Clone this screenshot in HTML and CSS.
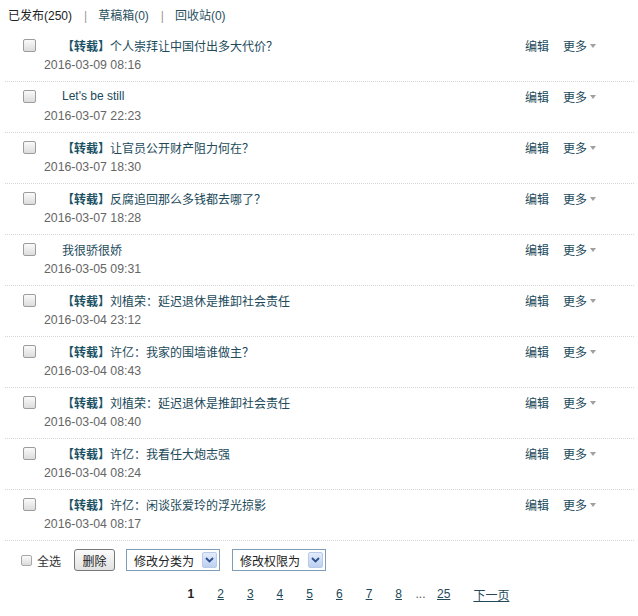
FILE: index.html
```html
<!DOCTYPE html>
<html lang="zh">
<head>
<meta charset="utf-8">
<title>博文管理</title>
<link rel="stylesheet" href="styles.css">
</head>
<body>
<div class="page">
  <div class="tabs">
    <span class="tab-cur">已发布(250)</span>
    <span class="sep">|</span>
    <a class="tab">草稿箱(0)</a>
    <span class="sep">|</span>
    <a class="tab">回收站(0)</a>
  </div>

  <ul class="list">
    <li class="row">
      <div class="main">
        <div class="line1"><input type="checkbox" class="cb"><a class="title"><b>【转载】</b>个人崇拜让中国付出多大代价？</a></div>
        <div class="date">2016-03-09 08:16</div>
      </div>
      <div class="ops"><a class="op">编辑</a><a class="op more">更多<i class="caret"></i></a></div>
    </li>
    <li class="row">
      <div class="main">
        <div class="line1"><input type="checkbox" class="cb"><a class="title">Let's be still</a></div>
        <div class="date">2016-03-07 22:23</div>
      </div>
      <div class="ops"><a class="op">编辑</a><a class="op more">更多<i class="caret"></i></a></div>
    </li>
    <li class="row">
      <div class="main">
        <div class="line1"><input type="checkbox" class="cb"><a class="title"><b>【转载】</b>让官员公开财产阻力何在？</a></div>
        <div class="date">2016-03-07 18:30</div>
      </div>
      <div class="ops"><a class="op">编辑</a><a class="op more">更多<i class="caret"></i></a></div>
    </li>
    <li class="row">
      <div class="main">
        <div class="line1"><input type="checkbox" class="cb"><a class="title"><b>【转载】</b>反腐追回那么多钱都去哪了？</a></div>
        <div class="date">2016-03-07 18:28</div>
      </div>
      <div class="ops"><a class="op">编辑</a><a class="op more">更多<i class="caret"></i></a></div>
    </li>
    <li class="row">
      <div class="main">
        <div class="line1"><input type="checkbox" class="cb"><a class="title">我很骄很娇</a></div>
        <div class="date">2016-03-05 09:31</div>
      </div>
      <div class="ops"><a class="op">编辑</a><a class="op more">更多<i class="caret"></i></a></div>
    </li>
    <li class="row">
      <div class="main">
        <div class="line1"><input type="checkbox" class="cb"><a class="title"><b>【转载】</b>刘植荣：延迟退休是推卸社会责任</a></div>
        <div class="date">2016-03-04 23:12</div>
      </div>
      <div class="ops"><a class="op">编辑</a><a class="op more">更多<i class="caret"></i></a></div>
    </li>
    <li class="row">
      <div class="main">
        <div class="line1"><input type="checkbox" class="cb"><a class="title"><b>【转载】</b>许亿：我家的围墙谁做主？</a></div>
        <div class="date">2016-03-04 08:43</div>
      </div>
      <div class="ops"><a class="op">编辑</a><a class="op more">更多<i class="caret"></i></a></div>
    </li>
    <li class="row">
      <div class="main">
        <div class="line1"><input type="checkbox" class="cb"><a class="title"><b>【转载】</b>刘植荣：延迟退休是推卸社会责任</a></div>
        <div class="date">2016-03-04 08:40</div>
      </div>
      <div class="ops"><a class="op">编辑</a><a class="op more">更多<i class="caret"></i></a></div>
    </li>
    <li class="row">
      <div class="main">
        <div class="line1"><input type="checkbox" class="cb"><a class="title"><b>【转载】</b>许亿：我看任大炮志强</a></div>
        <div class="date">2016-03-04 08:24</div>
      </div>
      <div class="ops"><a class="op">编辑</a><a class="op more">更多<i class="caret"></i></a></div>
    </li>
    <li class="row">
      <div class="main">
        <div class="line1"><input type="checkbox" class="cb"><a class="title"><b>【转载】</b>许亿：闲谈张爱玲的浮光掠影</a></div>
        <div class="date">2016-03-04 08:17</div>
      </div>
      <div class="ops"><a class="op">编辑</a><a class="op more">更多<i class="caret"></i></a></div>
    </li>
  </ul>

  <div class="toolbar">
    <label class="all"><input type="checkbox" class="cb small">全选</label>
    <button class="btn" type="button">删除</button>
    <div class="sel"><span class="sel-text">修改分类为</span><span class="sel-btn"><svg width="9" height="6" viewBox="0 0 9 6"><path d="M1 1 L4.5 4.5 L8 1" fill="none" stroke="#2c4f8c" stroke-width="1.8"/></svg></span></div>
    <div class="sel"><span class="sel-text">修改权限为</span><span class="sel-btn"><svg width="9" height="6" viewBox="0 0 9 6"><path d="M1 1 L4.5 4.5 L8 1" fill="none" stroke="#2c4f8c" stroke-width="1.8"/></svg></span></div>
  </div>

  <div class="pager">
    <span class="pg cur">1</span>
    <a class="pg">2</a>
    <a class="pg">3</a>
    <a class="pg">4</a>
    <a class="pg">5</a>
    <a class="pg">6</a>
    <a class="pg">7</a>
    <a class="pg">8</a>
    <span class="ell">...</span>
    <a class="pg">25</a>
    <a class="pg">下一页</a>
  </div>
</div>
</body>
</html>
```

FILE: styles.css
```css
* { box-sizing: border-box; }

html, body {
  margin: 0;
  padding: 0;
  background: #fff;
}

body {
  font-family: "Liberation Sans", Arial, "Noto Sans CJK SC", sans-serif;
  font-size: 12px;
  color: #333;
}

a { text-decoration: none; cursor: pointer; }

.page {
  width: 638px;
}

.tabs {
  height: 31px;
  line-height: 30px;
  padding-left: 8px;
  display: flex;
  align-items: center;
  white-space: nowrap;
}

.tab-cur { color: #222; }

.tab { color: #2a4f5f; }

.sep {
  color: #999;
  margin: 0 11px 0 12px;
}

.list {
  list-style: none;
  margin: 0 4px 0 5px;
  padding: 0;
}

.row {
  display: flex;
  padding: 4px 0 6px;
  border-bottom: 1px dotted #d4d4d4;
}

.main {
  width: 520px;
}

.line1 {
  display: flex;
  align-items: center;
  height: 20px;
}

.cb {
  appearance: none;
  -webkit-appearance: none;
  width: 13px;
  height: 13px;
  margin: 1px 0 0 18px;
  border: 1px solid #9c9c9c;
  border-radius: 2px;
  background: linear-gradient(#fafafa, #dcdcdc);
  flex: none;
}

.title {
  margin-left: 26px;
  color: #21495a;
  white-space: nowrap;
}

.title b {
  font-weight: bold;
  color: #1c5264;
}

.date {
  height: 20px;
  line-height: 20px;
  padding-left: 39px;
  color: #666;
  font-size: 12.3px;
}

.ops {
  display: flex;
  height: 20px;
  align-items: center;
  white-space: nowrap;
}

.op {
  color: #21495a;
}

.more {
  margin-left: 14px;
  display: inline-flex;
  align-items: center;
}

.caret {
  display: inline-block;
  width: 0;
  height: 0;
  margin-left: 3px;
  margin-top: 1px;
  border-left: 3.5px solid transparent;
  border-right: 3.5px solid transparent;
  border-top: 4px solid #a0a0a0;
}

.toolbar {
  display: flex;
  align-items: center;
  height: 22px;
  margin-top: 8px;
  padding-left: 21px;
}

.all {
  display: flex;
  align-items: center;
  color: #333;
}

.cb.small {
  width: 11px;
  height: 11px;
  margin: 1px 5px 0 0;
  border-color: #a8a8a8;
}

.btn {
  height: 22px;
  width: 41px;
  margin-left: 13px;
  padding: 0;
  font: inherit;
  color: #222;
  border: 1px solid #777;
  border-radius: 3px;
  background: linear-gradient(#fbfbfb, #e2e2e2);
}

.sel {
  display: flex;
  align-items: center;
  justify-content: space-between;
  width: 94px;
  height: 22px;
  margin-left: 11px;
  padding: 0 2px 0 7px;
  border: 1px solid #7f9db9;
  background: #fff;
  color: #222;
}

.sel + .sel { margin-left: 12px; }

.sel-btn {
  width: 15px;
  height: 16px;
  display: flex;
  align-items: center;
  justify-content: center;
  border: 1px solid #b9cbe9;
  border-radius: 2px;
  background: linear-gradient(#e3ecfb, #bcd0f2);
}

.pager {
  display: flex;
  align-items: center;
  height: 20px;
  margin-top: 13px;
  padding-left: 176px;
}

.pg {
  padding: 0 11.5px;
  color: #21495a;
  text-decoration: underline;
}

.pg.cur {
  color: #222;
  font-weight: bold;
  text-decoration: none;
}

.ell {
  margin-left: 2px;
  color: #555;
}
```
